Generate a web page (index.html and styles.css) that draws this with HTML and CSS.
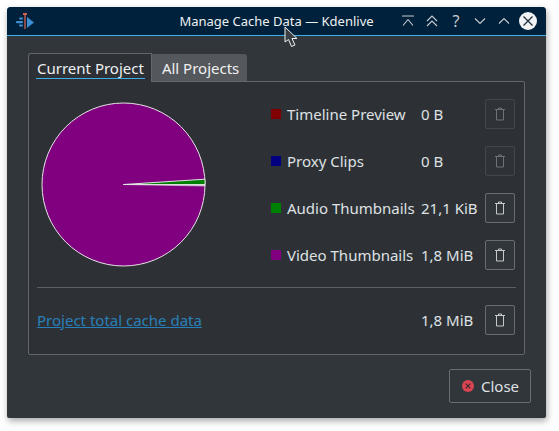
FILE: index.html
```html
<!DOCTYPE html>
<html lang="en">
  <head>
    <meta charset="UTF-8" />
    <meta name="viewport" content="width=device-width, initial-scale=1.0" />
    <title>Manage Cache Data — Kdenlive</title>
    <link rel="stylesheet" href="styles.css">
  </head>
  <body>
    <svg width="0" height="0" class="defs">
      <symbol id="trash" viewBox="0 0 16 16">
        <path d="M3 3.500h10M6.500 3.500V2h3v1.500M4.500 3.500V14h7V3.500" fill="none" stroke="currentColor" stroke-width="1" />
      </symbol>
    </svg>

    <div class="window">
      <div class="titlebar">
        <svg class="app-icon" width="20" height="18" viewBox="0 0 20 18">
          <path d="M12 5l7 5.500-7 5.500z" fill="#3d8fd1" />
          <rect x="1" y="9" width="7" height="2.200" rx="1" fill="#3d8fd1" />
          <rect x="4" y="5.500" width="4" height="2" rx="1" fill="#3d8fd1" />
          <rect x="4" y="12.500" width="4" height="2" rx="1" fill="#3d8fd1" />
          <rect x="9" y="1" width="2" height="16" fill="#8a4a45" />
          <rect x="8" y="1" width="4" height="2" fill="#d0604f" />
        </svg>
        <span class="title">Manage Cache Data — Kdenlive</span>
        <div class="title-buttons">
          <svg width="12" height="12" viewBox="0 0 12 12"><path d="M0 1h12M1 10.500l5-6 5 6" fill="none" stroke="#c8ccd0" stroke-width="1.100" /></svg>
          <svg width="12" height="12" viewBox="0 0 12 12"><path d="M1 6l5-5 5 5M1 11l5-5 5 5" fill="none" stroke="#c8ccd0" stroke-width="1.100" /></svg>
          <span class="help">?</span>
          <svg width="12" height="12" viewBox="0 0 12 12"><path d="M1 3.500l5 5 5-5" fill="none" stroke="#c8ccd0" stroke-width="1.100" /></svg>
          <svg width="12" height="12" viewBox="0 0 12 12"><path d="M1 8.500l5-5 5 5" fill="none" stroke="#c8ccd0" stroke-width="1.100" /></svg>
          <svg class="win-close" width="18" height="18" viewBox="0 0 18 18"><circle cx="9" cy="9" r="9" fill="#f2f3f4" /><path d="M4.500 4.500l9 9M13.500 4.500l-9 9" stroke="#20303f" stroke-width="1.300" /></svg>
        </div>
      </div>

      <div class="content">
        <div class="tabs">
          <div class="tab active"><span>Current Project</span></div>
          <div class="tab"><span>All Projects</span></div>
        </div>
        <div class="pane">
          <div class="top">
            <svg class="pie" width="165" height="165" viewBox="0 0 165 165">
              <circle cx="82.500" cy="82.500" r="81.500" fill="#800080" stroke="#e4e4e4" stroke-width="1" />
              <path d="M82.500 82.500L164 77.200A81.500 81.500 0 0 1 164 82.500z" fill="#008000" stroke="#e4e4e4" stroke-width="1" />
              <path d="M82.500 82.500L164 82.500 164 84z" fill="#c8c8c8" stroke="#e4e4e4" stroke-width="0.600" />
            </svg>
            <div class="rows">
              <div class="row">
                <i class="swatch red"></i><span class="name">Timeline Preview</span><span class="size">0 B</span>
                <button class="trash" disabled><svg width="16" height="16"><use href="#trash" /></svg></button>
              </div>
              <div class="row">
                <i class="swatch blue"></i><span class="name">Proxy Clips</span><span class="size">0 B</span>
                <button class="trash" disabled><svg width="16" height="16"><use href="#trash" /></svg></button>
              </div>
              <div class="row">
                <i class="swatch green"></i><span class="name">Audio Thumbnails</span><span class="size">21,1 KiB</span>
                <button class="trash"><svg width="16" height="16"><use href="#trash" /></svg></button>
              </div>
              <div class="row">
                <i class="swatch purple"></i><span class="name">Video Thumbnails</span><span class="size">1,8 MiB</span>
                <button class="trash"><svg width="16" height="16"><use href="#trash" /></svg></button>
              </div>
            </div>
          </div>
          <div class="divider"></div>
          <div class="total">
            <a class="total-link">Project total cache data</a>
            <span class="size">1,8 MiB</span>
            <button class="trash"><svg width="16" height="16"><use href="#trash" /></svg></button>
          </div>
        </div>
        <div class="footer">
          <button class="close">
            <svg width="14" height="14" viewBox="0 0 14 14"><circle cx="7" cy="7" r="6" fill="#da4453" /><path d="M4.700 4.700l4.600 4.600M9.300 4.700l-4.600 4.600" stroke="#3a2a30" stroke-width="1.200" /></svg>
            Close
          </button>
        </div>
      </div>

      <svg class="cursor" width="15" height="23" viewBox="0 0 15 23">
        <path d="M1 1v15l3.500-2.500 3 7 3.500-1.500-3-6.500h5z" fill="#3a3f44" stroke="#eff0f1" stroke-width="1" />
      </svg>
    </div>
  </body>
</html>
```

FILE: styles.css
```css
body {
  margin: 0;
  height: 431px;
  overflow: hidden;
  background: #fff;
  font-family: "Noto Sans", sans-serif;
  font-size: 15px;
  color: #dfe1e3;
}
.defs {
  position: absolute;
}
.window {
  position: relative;
  width: 539px;
  height: 411px;
  margin: 7px 0 0 7px;
  border-radius: 4px 4px 2px 2px;
  background: #31363b;
  box-shadow: 1px 3px 7px rgba(0, 0, 0, 0.35);
  display: flex;
  flex-direction: column;
  overflow: hidden;
}

/* title bar */
.titlebar {
  height: 29px;
  box-sizing: border-box;
  flex-shrink: 0;
  position: relative;
  background: #00213b;
  border-bottom: 1px solid #3daee9;
  display: flex;
  align-items: center;
  justify-content: center;
}
.app-icon {
  position: absolute;
  left: 8px;
  top: 5px;
}
.title {
  font-size: 13px;
  color: #eff0f1;
}
.title-buttons {
  position: absolute;
  left: 395px;
  top: 4px;
  height: 19px;
  display: flex;
  align-items: center;
  gap: 12px;
}
.help {
  width: 12px;
  text-align: center;
  font-size: 16px;
  line-height: 18px;
  color: #c8ccd0;
}
.win-close {
  margin-left: -3px;
}

/* tabs */
.content {
  flex: 1;
  padding: 17px 15px 15px 21px;
  display: flex;
  flex-direction: column;
}
.tabs {
  display: flex;
  height: 28px;
  position: relative;
  z-index: 1;
}
.tab {
  padding: 0 8px 0 10px;
  box-sizing: border-box;
  height: 27px;
  margin-top: 1px;
  background: #54575b;
  border-radius: 0 3px 0 0;
  display: flex;
  align-items: center;
  color: #eff0f1;
}
.tab.active {
  height: 29px;
  margin-top: 0;
  background: #2d3136;
  border: 1px solid #63676b;
  border-bottom: none;
  border-radius: 3px 0 0 0;
  padding: 0 6px 0 7px;
}
.tab.active span {
  border-bottom: 1px solid #3daee9;
  line-height: 20px;
  margin-top: 1px;
  padding: 0 1px;
}
.pane {
  width: 497px;
  height: 274px;
  box-sizing: border-box;
  background: #2d3136;
  border: 1px solid #63676b;
  border-radius: 0 2px 2px 2px;
  padding: 17px 8px 0;
  display: flex;
  flex-direction: column;
}
.top {
  display: flex;
  height: 171px;
}
.pie {
  margin: 3px 0 0 4px;
  flex-shrink: 0;
}
.rows {
  margin-left: 65px;
  display: flex;
  flex-direction: column;
  gap: 17px;
}
.row {
  display: flex;
  align-items: center;
  height: 30px;
}
.swatch {
  width: 10px;
  height: 10px;
  margin-right: 6px;
  flex-shrink: 0;
}
.red {
  background: #800000;
}
.blue {
  background: #000080;
}
.green {
  background: #008000;
}
.purple {
  background: #800080;
}
.name {
  width: 134px;
  white-space: nowrap;
}
.size {
  width: 64px;
  white-space: nowrap;
}
.trash {
  width: 30px;
  height: 30px;
  padding: 0;
  background: #31363b;
  border: 1px solid #696d71;
  border-radius: 2px;
  color: #c6c8ca;
  display: flex;
  align-items: center;
  justify-content: center;
}
.trash:disabled {
  background: #2f3338;
  border-color: #43474c;
  color: #6e7276;
}
.divider {
  height: 1px;
  margin-top: 17px;
  background: #5b5f63;
}
.total {
  display: flex;
  align-items: center;
  height: 30px;
  margin-top: 17px;
}
.total-link {
  width: 384px;
  color: #2980b9;
  text-decoration: underline;
}

.footer {
  margin-top: 14px;
  display: flex;
  justify-content: flex-end;
}
.close {
  width: 82px;
  height: 34px;
  background: #31363b;
  border: 1px solid #696d71;
  border-radius: 2px;
  color: #dfe1e3;
  font: inherit;
  display: flex;
  align-items: center;
  justify-content: center;
  gap: 6px;
  padding: 0;
}

/* mouse pointer sits over the title */
.cursor {
  position: absolute;
  left: 277px;
  top: 19px;
}
```
